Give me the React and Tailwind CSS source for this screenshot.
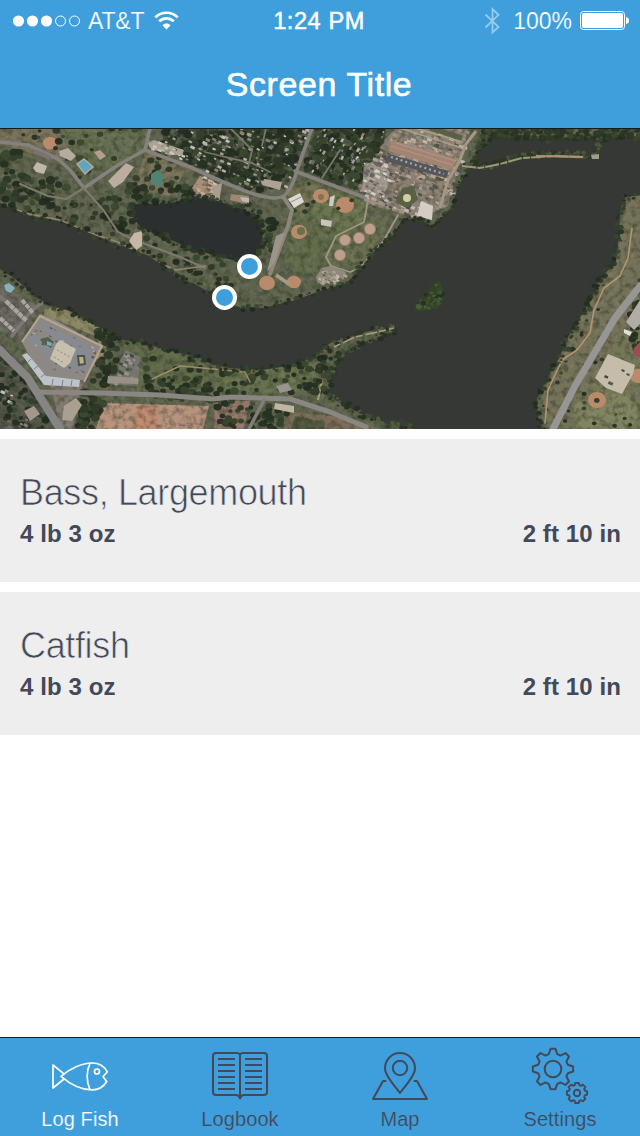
import React from "react";

/* ---------- deterministic scatter helpers for the aerial map ---------- */
function rng(seed) {
  let s = seed;
  return () => {
    s = (s * 1664525 + 1013904223) % 4294967296;
    return s / 4294967296;
  };
}
const GREENS = ["#222e1f", "#293623", "#303e28", "#1f291d", "#38472c"];
const ROOFS = ["#a39d96", "#b5aea6", "#837e78", "#93806f", "#c4c1bd", "#6c6862"];
const inside = (x, y, poly) => {
  let c = false;
  for (let i = 0, j = poly.length - 1; i < poly.length; j = i++) {
    const [xi, yi] = poly[i];
    const [xj, yj] = poly[j];
    if (yi > y !== yj > y && x < ((xj - xi) * (y - yi)) / (yj - yi) + xi) c = !c;
  }
  return c;
};
function fill(seed, poly, n, r0, r1, colors) {
  const r = rng(seed);
  const xs = poly.map((p) => p[0]);
  const ys = poly.map((p) => p[1]);
  const x0 = Math.min(...xs), x1 = Math.max(...xs), y0 = Math.min(...ys), y1 = Math.max(...ys);
  const out = [];
  for (let i = 0; i < n; i++) {
    const x = x0 + r() * (x1 - x0);
    const y = y0 + r() * (y1 - y0);
    const size = r0 + r() * (r1 - r0);
    const color = colors[Math.floor(r() * colors.length)];
    if (inside(x, y, poly)) out.push({ x, y, size, color });
  }
  return out;
}
function along(seed, pts, step, jitter, r0, r1, colors) {
  const r = rng(seed);
  const out = [];
  for (let i = 0; i < pts.length - 1; i++) {
    const [ax, ay] = pts[i];
    const [bx, by] = pts[i + 1];
    const n = Math.max(1, Math.round(Math.hypot(bx - ax, by - ay) / step));
    for (let k = 0; k < n; k++) {
      const t = k / n;
      out.push({
        x: ax + (bx - ax) * t + (r() - 0.5) * jitter,
        y: ay + (by - ay) * t + (r() - 0.5) * jitter,
        size: r0 + r() * (r1 - r0),
        color: colors[Math.floor(r() * colors.length)],
      });
    }
  }
  return out;
}
const Trees = ({ items, opacity = 0.9 }) => (
  <g opacity={opacity}>
    {items.map((t, i) => (
      <ellipse key={i} cx={t.x} cy={t.y} rx={t.size} ry={t.size * 0.85} fill={t.color} />
    ))}
  </g>
);
const Blocks = ({ items, angle = 25 }) => (
  <g>
    {items.map((t, i) => (
      <rect key={i} x={t.x} y={t.y} width={t.size * 1.6} height={t.size} fill={t.color} transform={`rotate(${angle} ${t.x} ${t.y})`} />
    ))}
  </g>
);
const str = (pts) => pts.map((p) => p.join(",")).join(" ");

/* ---------- shorelines ---------- */
const NORTH = [[0,75],[16,82],[30,88],[63,94],[87,104],[113,115],[127,120],[147,127],[167,140],[177,150],[195,156],[214,167],[240,180],[263,180],[296,172],[320,163],[345,156],[360,142],[373,124],[393,107],[402,92],[418,90],[433,99],[451,80],[459,57],[469,40]];
const COVE = [[469,40],[476,32],[476,24],[493,7],[519,10],[553,12],[576,9],[599,9],[640,9]];
const EAST = [[640,67],[626,69],[621,79],[619,97],[618,120],[613,137],[599,152],[589,175],[569,207],[559,230],[549,247],[536,273],[539,293],[543,301]];
const SOUTH = [[413,301],[390,297],[363,287],[346,278],[326,267],[330,250],[340,227],[356,217],[395,203],[395,198],[373,202],[330,215],[316,228],[293,237],[263,242],[230,240],[213,237],[200,230],[167,222],[143,215],[123,212],[100,200],[70,183],[50,178],[33,167],[17,152],[0,141]];
const RIVER = [...NORTH, ...COVE, ...EAST, ...SOUTH];
const POND = [[133,77],[143,75],[167,77],[190,69],[214,72],[240,80],[256,89],[263,104],[260,127],[240,134],[213,127],[187,119],[160,107],[140,99],[132,88]];
const SUBURB = [[165,0],[310,0],[300,33],[285,60],[255,62],[220,52],[200,38],[160,22]];
const SUBURB2 = [[316,0],[388,0],[378,25],[356,62],[336,56],[304,42]];
const CONSTRUCTION = [[371,27],[396,0],[468,0],[461,30],[448,78],[420,90],[366,76],[358,58]];

function Aerial() {
  return (
    <svg width="640" height="301" viewBox="0 0 640 301" className="block" aria-hidden="true">
      <defs>
        <filter id="grain" x="0" y="0" width="100%" height="100%" colorInterpolationFilters="sRGB">
          <feTurbulence type="fractalNoise" baseFrequency="0.16" numOctaves="4" seed="8" />
          <feColorMatrix values="0 0 0 0 0.14  0 0 0 0 0.18  0 0 0 0 0.11  2.8 0 0 0 -1.2" />
        </filter>
        <filter id="light" x="0" y="0" width="100%" height="100%" colorInterpolationFilters="sRGB">
          <feTurbulence type="fractalNoise" baseFrequency="0.2" numOctaves="3" seed="31" />
          <feColorMatrix values="0 0 0 0 0.66  0 0 0 0 0.6  0 0 0 0 0.5  0 3 0 0 -1.5" />
        </filter>
        <filter id="soft" x="0" y="0" width="100%" height="100%" colorInterpolationFilters="sRGB">
          <feGaussianBlur stdDeviation="0.55" />
          <feColorMatrix type="saturate" values="0.9" />
        </filter>
      </defs>
      <g filter="url(#soft)">
        <rect x="-4" y="-4" width="648" height="309" fill="#5f644c" />
        {/* fields and bare ground */}
        <polygon points="0,0 55,0 80,22 60,34 0,16" fill="#7b7259" />
        <polygon points="55,0 150,0 140,25 90,48 72,26" fill="#646e4e" />
        <polygon points="146,22 188,40 170,68 134,60" fill="#7b7356" />
        <polygon points="300,50 365,72 358,100 330,140 296,150 285,130 290,88" fill="#616c48" />
        <polygon points="284,60 318,58 308,84 296,82" fill="#787352" />
        <ellipse cx="340" cy="83" rx="28" ry="16" fill="#6b754c" />
        <polygon points="350,98 388,84 388,96 366,132 333,140 326,128 334,110" fill="#696f4b" />
        <polygon points="44,182 58,177 104,202 112,214 100,238 86,238 100,210 44,187" fill="#8e8860" />
        <polygon points="128,215 170,224 215,240 214,262 128,262" fill="#5f6a46" />
        <polygon points="215,244 318,236 322,262 215,270" fill="#657149" />
        <polygon points="104,275 209,278 203,301 96,301" fill="#bb927a" />
        <polygon points="136,278 160,278 157,301 134,301" fill="#c58a6c" />
        <polygon points="0,155 40,180 20,212 0,202" fill="#6a665e" />
        <polygon points="0,212 68,301 0,301" fill="#535548" />
        <polygon points="50,252 84,252 72,301 60,301" fill="#807970" />
        <polygon points="215,273 250,273 244,301 214,301" fill="#957766" />
        <polygon points="290,284 350,290 380,301 284,301" fill="#7d6d55" />
        <polygon points="295,288 325,294 324,301 291,301" fill="#4f5638" />
        <polygon points="628,68 640,68 640,300 548,300 542,268 570,208 604,150 619,100" fill="#757257" />
        <polygon points="640,170 570,301 640,301" fill="#747654" />
        <ellipse cx="606" cy="285" rx="33" ry="20" fill="#81845c" />
        <polygon points={str(CONSTRUCTION)} fill="#8d8072" />
        <polygon points={str(SUBURB)} fill="#4e5643" />
        <polygon points={str(SUBURB2)} fill="#4d5640" />
        <rect width="640" height="301" filter="url(#grain)" opacity="0.42" />
        <rect width="640" height="301" filter="url(#light)" opacity="0.22" />

        {/* ball diamonds */}
        {[[50,15,7],[299,104,8],[321,68,8],[345,77,9],[267,155,8],[294,154,7],[597,272,9],[638,248,8]].map(([x, y, r], i) => (
          <ellipse key={i} cx={x} cy={y} rx={r} ry={r * 0.9} fill="#bd8a66" />
        ))}
        <circle cx="301" cy="103" r="4" fill="#687245" />
        <circle cx="321" cy="69" r="3" fill="#84744a" />
        {[[370,101],[359,110],[345,112],[340,127]].map(([x, y], i) => (
          <circle key={i} cx={x} cy={y} r="5.6" fill="#c19d89" stroke="#8f8269" strokeWidth="0.8" />
        ))}

        {/* woods and houses */}
        <Trees items={fill(5, SUBURB, 620, 1.6, 4.8, GREENS)} />
        <Trees items={fill(6, SUBURB2, 370, 1.6, 4.4, GREENS)} />
        <Blocks items={fill(7, SUBURB, 170, 1.2, 3, ROOFS)} />
        <Blocks items={fill(8, SUBURB2, 85, 1.1, 2.8, ROOFS)} angle={-60} />
        <Trees items={fill(9, [[0,20],[22,22],[26,48],[68,50],[66,66],[40,76],[0,72]], 120, 2, 5, GREENS)} />
        <Trees items={fill(10, [[0,0],[145,0],[130,25],[80,50],[60,26]], 44, 1.8, 4, GREENS)} />
        <Trees items={fill(12, [[20,60],[80,74],[128,84],[128,120],[95,104],[10,78]], 80, 1.6, 4.2, GREENS)} />
        <Trees items={fill(13, [[92,70],[130,70],[134,95],[118,110]], 45, 2, 4.5, GREENS)} />
        <Trees items={fill(14, [[140,100],[212,128],[240,143],[236,166],[180,150],[140,124]], 85, 1.7, 3.8, GREENS)} />
        <Trees items={fill(15, [[128,62],[136,46],[200,62],[195,70],[165,77],[132,78]], 55, 2, 4.5, GREENS)} />
        <Trees items={fill(16, [[200,74],[252,76],[280,90],[272,132],[262,140],[264,100]], 110, 2, 4.5, GREENS)} />
        <Trees items={fill(17, [[96,200],[118,210],[120,225],[108,258],[92,256],[98,236]], 80, 2, 5, GREENS)} />
        <Trees items={fill(18, [[143,225],[214,236],[213,252],[145,242]], 24, 2, 3.6, GREENS)} />
        <Trees items={fill(29, [[143,246],[214,252],[213,278],[150,268]], 80, 2, 4.5, GREENS)} />
        <Trees items={fill(19, [[215,242],[322,230],[328,268],[215,268]], 60, 2, 4.6, GREENS)} />
        <Trees items={fill(20, [[80,260],[104,274],[92,301],[76,301]], 70, 2.3, 5, GREENS)} />
        <Trees items={fill(21, [[0,216],[52,285],[50,301],[0,301]], 120, 1.8, 4, GREENS)} />
        <Trees items={fill(22, [[618,90],[636,80],[625,130],[560,260],[548,295],[540,280]], 130, 1.2, 3.2, GREENS)} />
        <Trees items={fill(23, [[640,140],[640,225],[624,212],[632,180]], 50, 2, 4, GREENS)} />
        <Trees items={fill(24, [[600,220],[640,300],[550,301],[590,225]], 34, 1.4, 3, GREENS)} />
        <Trees items={fill(25, [[245,272],[290,280],[280,301],[250,301]], 50, 2, 4, GREENS)} />
        <Trees items={fill(26, [[290,45],[360,72],[350,95],[290,90]], 18, 2, 3, GREENS)} />
        <Trees items={fill(27, [[215,272],[246,272],[240,301],[214,301]], 26, 2, 4, GREENS)} />
        <Trees items={fill(28, [[145,20],[188,38],[180,50],[150,50]], 20, 2, 4, GREENS)} />

        {/* streets */}
        <g fill="none" strokeLinejoin="round" strokeLinecap="round">
          <path d="M0 14L28 17L58 31L70 42L84 60L118 37L145 22L150 0M145 22L190 39L214 50L240 61Q278 76 286 66T296 45L312 0M295 43L366 70" stroke="#85817b" strokeWidth="3.6" />
          <path d="M20 56L48 68L66 71L84 60L104 83L118 104L132 111L180 129L205 140" stroke="#7c796d" strokeWidth="2.2" />
          <path d="M205 24L225 29L252 35L270 44M230 0L252 22L248 40M266 0L262 18M340 22L322 50" stroke="#77756b" strokeWidth="1.8" />
          <path d="M284 70L292 82L288 98L270 146" stroke="#8f8777" strokeWidth="4" />
          <path d="M366 72L400 82M398 87L384 112L360 140L350 144L331 138L326 129L336 108L364 94L368 72" stroke="#9f9682" strokeWidth="1.8" />
          <path d="M0 222L28 250L60 301" stroke="#878584" strokeWidth="8" />
          <path d="M35 264L100 265L160 267L214 271L230 269L290 271L330 284L366 299" stroke="#8a8783" strokeWidth="5" />
          <path d="M264 272L249 301" stroke="#817d77" strokeWidth="3.6" />
          <path d="M0 168L24 192M12 208L32 182L52 168" stroke="#7b7773" strokeWidth="3.5" />
          <path d="M640 158L615 190L575 258L553 301" stroke="#989694" strokeWidth="7" />
          <path d="M620 148L604 160L594 182L590 205L577 222L562 232L548 262L545 295M632 100L628 130L620 148" stroke="#b4966c" strokeWidth="1.6" />
          <path d="M0 77L30 86L60 92L90 105L118 114L150 130L175 142L206 138" stroke="#958767" strokeWidth="1.4" />
          <path d="M152 251L180 238L214 241L245 244L250 254" stroke="#a08c68" strokeWidth="1.4" />
        </g>

        {/* parking lots and buildings */}
        <polygon points="32,24 37,22 51,28 49,32" fill="#7c7272" />
        <polygon points="33,40 37,34 47,38 44,46 36,44" fill="#c0b8a6" />
        <polygon points="59,23 68,20 76,28 71,33 60,28" fill="#b6ab9c" />
        <polygon points="94,24 100,22 106,28 100,32" fill="#b99d8c" />
        <polygon points="77,36 84,31 93,39 85,46" fill="#58a8c4" stroke="#b5ac9a" strokeWidth="1.4" />
        <polygon points="151,46 158,42 164,48 160,59 151,56" fill="#4c8472" />
        <polygon points="108,53 126,35 134,39 123,54 114,60" fill="#bcae9f" />
        <polygon points="148,15 154,12 184,22 182,28 165,26 150,20" fill="#aba395" />
        <Blocks items={fill(91, [[148,12],[156,11],[186,23],[182,30],[150,20]], 60, 1.2, 2.8, ["#cbc5ba", "#5a6048", "#8e877b"])} />
        <polygon points="192,60 200,48 214,53 213,65 197,66" fill="#a98f77" />
        <Blocks items={fill(92, [[190,58],[200,46],[216,54],[214,68],[194,68]], 60, 1.2, 3, ["#c3ab95", "#6a644f", "#cdc5ba", "#9d7c64"])} />
        <polygon points="134,105 142,103 142,118 136,122 129,113" fill="#c6b8a6" />
        <polygon points="288,71 300,65 304,74 294,80" fill="#dadad6" />
        <path d="M291 74L301 69" stroke="#777" strokeWidth="0.8" />
        <polygon points="330,69 335,67 333,78 329,78" fill="#cfcac1" />
        <polygon points="321,91 332,93 331,99 321,97" fill="#c9c4bb" />
        <polygon points="264,51 282,54 280,62 262,57" fill="#b0a191" />
        <polygon points="213,58 222,55 219,76 213,75" fill="#aa9d90" />
        <polygon points="231,66 249,68 247,76 230,72" fill="#a08673" />
        <polygon points="240,69 249,70 249,75 242,73" fill="#bcbab5" />
        <polygon points="276,108 285,104 275,134 267,144" fill="#9c948a" />
        <path d="M276 147L289 156" stroke="#a89b86" strokeWidth="3.5" fill="none" />
        <polygon points="316,149 322,140 330,138 346,144 344,151 336,155 318,155" fill="#92887a" />
        <Blocks items={fill(93, [[314,150],[322,140],[346,144],[344,152],[318,157]], 60, 1, 2.5, ["#c3b9aa", "#5e6150", "#aea291"])} />

        <polygon points="22,214 40,186 52,190 102,218 84,252 42,252" fill="#8f8883" />
        <polyline points="22,214 40,188 102,218 84,254" fill="none" stroke="#b9a492" strokeWidth="2" />
        <Blocks items={fill(51, [[30,205],[44,194],[98,220],[80,248],[52,244]], 110, 1, 2, ["#585653", "#77736f", "#ada7a0", "#655b55"])} />
        <polygon points="27,210 34,206 50,222 54,210 38,200 40,196 76,212 92,222 86,240 76,244 52,235" fill="#868b92" />
        <Blocks items={fill(94, [[27,210],[40,196],[76,212],[92,222],[84,242],[52,236]], 55, 1, 2, ["#605e5b", "#a3a8af", "#76797e"])} />
        <polygon points="40,211 48,209 54,214 50,219 43,216" fill="#55614d" />
        <polygon points="47,213 52,215 51,218 47,217" fill="#78aeb0" />
        <polygon points="56,216 60,212 76,221 70,235 64,240 50,231" fill="#c9c0aa" />
        <path d="M54 229L64 235M57 222L70 229" stroke="#8f8979" strokeWidth="1" strokeDasharray="2 2" />
        <polygon points="78,228 84,228 85,236 79,237" fill="#bdb17f" stroke="#4c5347" strokeWidth="2" />
        <polygon points="22,227 27,225 46,248 80,252 79,259 44,257" fill="#bdc3ca" />
        <path d="M28 234L31 231M34 241L38 238M41 249L45 246M52 257L53 251M62 258L63 252M71 258L72 252" stroke="#78828c" strokeWidth="1" />
        <path d="M6 173L27 193M0 190L14 203M22 172L33 185" stroke="#aaa59f" strokeWidth="4" strokeDasharray="5 0.8" />
        <polygon points="4,157 9,155 15,160 11,165 6,163" fill="#82b3b7" />
        <polygon points="118,236 126,222 140,229 138,258 108,256 109,248 120,248" fill="#75746e" />
        <Blocks items={fill(52, [[118,236],[126,222],[140,229],[137,257],[110,255]], 60, 1.2, 3, ["#96948e", "#595c55", "#7f7c76", "#3e4a35"])} />
        <polygon points="108,248 138,250 138,256 107,255" fill="#9b9084" />
        <polygon points="64,278 76,270 82,277 72,293 62,292" fill="#aaa08f" />
        <polygon points="24,283 34,278 40,286 30,293" fill="#a4978a" />
        <Blocks items={fill(61, [[0,250],[30,290],[18,301],[0,301]], 22, 1.5, 3.5, ROOFS)} />
        <polygon points="275,275 294,278 294,285 274,281" fill="#c0b69f" />
        <polygon points="276,258 288,255 292,262 280,265" fill="#9a958b" />
        <path d="M322 252L318 272" stroke="#ad9a78" strokeWidth="2" />
        <polygon points="595,250 608,226 635,237 633,246 622,266 606,260" fill="#c6bda8" />
        <Blocks items={[{ x: 605, y: 247, size: 2.4, color: "#3f4641" }, { x: 609, y: 253, size: 3, color: "#4f5958" }, { x: 622, y: 241, size: 2, color: "#4c4c48" }, { x: 627, y: 245, size: 2, color: "#59544e" }]} />
        <polygon points="626,194 640,172 640,196 634,202" fill="#b3aca5" />
        <polygon points="624,201 632,204 630,208 624,205" fill="#e2ded8" />
        <polygon points="634,220 640,214 640,229 633,227" fill="#a24b50" />

        {/* construction yard */}
        <Blocks items={fill(42, CONSTRUCTION, 520, 1, 3.4, ["#a3917d", "#b5a390", "#776d60", "#5c5a4e", "#c0b7aa", "#8e8e86", "#4e5143"])} angle={20} />
        <polygon points="392,12 457,31 452,42 388,23" fill="#a68270" />
        <path d="M391 18L453 37M396 15L456 33" stroke="#b79885" strokeWidth="0.9" />
        <polygon points="389,26 449,43 446,50 385,33" fill="#55555a" />
        <path d="M391 29L444 46" stroke="#a3a7ac" strokeWidth="2.2" strokeDasharray="2 3" />
        <path d="M400 0L462 20M415 0L462 14" stroke="#ab9f86" strokeWidth="1.8" fill="none" />
        <path d="M430 0L462 10" stroke="#566342" strokeWidth="5" />
        <path d="M476 3L466 16L459 34L448 52L440 80" stroke="#a9967f" strokeWidth="3" fill="none" />
        <polygon points="364,36 380,32 390,44 384,72 362,62" fill="#aaa196" opacity="0.7" />
        <Blocks items={fill(43, [[362,34],[382,32],[390,44],[384,72],[362,62]], 85, 1, 3, ["#d0cbc3", "#66635d", "#8d887e"])} />
        <polygon points="402,60 414,58 418,72 406,80 396,74" fill="#586042" />
        <circle cx="407" cy="70" r="4" fill="#d5cc9f" />
        <polygon points="421,73 433,78 432,92 417,88" fill="#d4cdc4" />

        {/* water */}
        <polygon points={str(RIVER)} fill="#353834" />
        <ellipse cx="395" cy="297" rx="16" ry="6" fill="#42453a" opacity="0.4" />
        <polygon points={str(POND)} fill="#2b2f30" />

        {/* wooded banks */}
        <Trees items={along(71, NORTH.slice(0, 14), 3, 7, 1, 2.8, GREENS)} />
        <Trees items={along(72, NORTH.slice(13, 20), 3.2, 6, 1, 2.6, GREENS)} />
        <Trees items={along(73, NORTH.slice(17), 2.6, 4, 1, 2.4, GREENS)} />
        <Trees items={along(74, COVE, 2, 5, 1.5, 3.4, GREENS)} />
        <Trees items={fill(75, [[480,0],[640,0],[640,9],[600,9],[555,12],[500,9],[478,20]], 260, 1.5, 4, ["#2c3923", "#39482d", "#263120"])} />
        <Trees items={along(76, EAST, 2.2, 6, 1, 3, GREENS)} />
        <Trees items={along(77, SOUTH.slice(0, 12), 2, 6, 1, 3, ["#2b3823", "#404f2f", "#525d3a", "#232d1f"])} />
        <Trees items={along(78, SOUTH.slice(11), 3, 6, 1, 2.8, GREENS)} />
        <Trees items={along(79, [...POND, POND[0]], 2.6, 7, 1.2, 3.2, GREENS)} />
        <Trees items={fill(80, [[316,228],[330,215],[342,222],[330,240],[326,268],[312,264]], 55, 1.6, 3.6, GREENS)} />

        {/* causeway, spit and island */}
        <Trees items={along(81, [[464,38],[490,38],[520,29],[553,25],[596,28],[600,10]], 1, 6, 1.2, 2.4, ["#36482c", "#4d5a3b", "#2a3622"])} />
        <path d="M462 38L480 40L500 36L522 30L553 28L583 29" stroke="#a1967a" strokeWidth="2" fill="none" strokeDasharray="14 1.5 7 1" />
        <path d="M536 28L583 29" stroke="#b09370" strokeWidth="1.8" />
        <polygon points="591,27 599,26 599,31 592,31" fill="#a59c86" />
        <path d="M334 219L355 209L378 204L394 200" stroke="#a1987c" strokeWidth="1.8" fill="none" strokeDasharray="7 3 12 2" />
        <polygon points="440,153 444,165 442,176 438,180 424,183 415,183 426,168 432,156" fill="#354528" />
        <Trees items={fill(82, [[440,153],[444,165],[438,180],[415,183],[430,158]], 95, 1.2, 2.8, ["#304325", "#40552e", "#4e6237", "#233220"])} />
      </g>
      <rect width="640" height="1" fill="#141c22" />
    </svg>
  );
}

function Pin({ className }) {
  return <div className={`absolute size-[25px] rounded-full border-4 border-white bg-[#3e9fdc] ${className}`} />;
}

/* ---------- tab icons ---------- */
function gear(cx, cy, outer, root, teeth, top, base) {
  let d = "";
  for (let i = 0; i < teeth; i++) {
    const a = (i / teeth) * Math.PI * 2 - Math.PI / 2;
    [[-base, root], [-top, outer], [top, outer], [base, root]].forEach(([o, r], k) => {
      const x = (cx + r * Math.cos(a + o)).toFixed(2);
      const y = (cy + r * Math.sin(a + o)).toFixed(2);
      if (i === 0 && k === 0) d += `M${x} ${y}`;
      else d += `L${x} ${y}`;
    });
  }
  return d + "Z";
}
const iconProps = { width: 60, height: 60, viewBox: "0 0 60 60", fill: "none", stroke: "currentColor", strokeWidth: 2, strokeLinejoin: "round", strokeLinecap: "round" };

const FishIcon = () => (
  <svg {...iconProps} strokeWidth="1.7">
    <path d="M11 30.3C20 22.5 32 17 42 17C49 17 54.5 20.5 57.3 26L53 30.5L56.7 35.5C53.5 41 48.5 43.8 42 43.8C31 43.8 20 38 11 30.3Z" />
    <path d="M14 27.8L3 19V42L14 33M39.8 17.8C36.3 25 36.3 35 39.8 43.2" />
    <circle cx="47" cy="25.5" r="2.5" />
  </svg>
);
const BookIcon = () => (
  <svg {...iconProps} strokeLinecap="butt">
    <path d="M30 9C29.5 7.5 28.5 7 27 7H6C4 7 3 8 3 10V46C3 48 4 49 6 49H26C28.5 49 29.5 50 30 52.5C30.5 50 31.5 49 34 49H54C56 49 57 48 57 46V10C57 8 56 7 54 7H33C31.5 7 30.5 7.5 30 9ZM30 8V53" />
    <path d="M8 13H25M8 19H25M8 25H25M8 31H25M8 37H25M8 43H25M35 13H52M35 19H52M35 25H52M35 31H52M35 37H52M35 43H52" />
  </svg>
);
const MapIcon = () => (
  <svg {...iconProps}>
    <path d="M30 52C26 46 15 31 15 22.5C15 13.8 21.5 7 30 7S45 13.8 45 22.5C45 31 34 42 30 47C26 42 15 31 15 22.5" className="hidden" />
    <path d="M30 47C26 41.5 15 30 15 22.5C15 13.8 21.5 7 30 7S45 13.8 45 22.5C45 30 34 41.5 30 47Z" />
    <circle cx="30" cy="22" r="7.2" />
    <path d="M15.5 35H13L3 53H57L47 35H44.5" />
  </svg>
);
const GearsIcon = () => (
  <svg {...iconProps}>
    <path d={gear(23, 23, 20.3, 15.4, 8, 0.12, 0.28)} />
    <circle cx="23" cy="23" r="8.3" />
    <path d={gear(47, 47, 10.2, 8.2, 8, 0.18, 0.28)} strokeWidth="1.9" />
    <circle cx="47" cy="47" r="3.2" />
  </svg>
);

const TABS = [
  { label: "Log Fish", Icon: FishIcon, color: "text-white" },
  { label: "Logbook", Icon: BookIcon, color: "text-[#434959]" },
  { label: "Map", Icon: MapIcon, color: "text-[#434959]" },
  { label: "Settings", Icon: GearsIcon, color: "text-[#434959]" },
];

function StatusBar() {
  return (
    <div className="grid h-[42px] grid-cols-3 items-center text-[23px] leading-[42px]">
      <div className="flex items-center pl-3">
        <svg width="70" height="14" viewBox="0 0 70 14" fill="white" className="-mt-px">
          <circle cx="6.5" cy="7" r="5.6" />
          <circle cx="20.5" cy="7" r="5.6" />
          <circle cx="34.5" cy="7" r="5.6" />
          <circle cx="48.5" cy="7" r="5" fill="none" stroke="white" />
          <circle cx="62.5" cy="7" r="5" fill="none" stroke="white" />
        </svg>
        <span className="ml-1.5 tracking-[-0.2px] [-webkit-text-stroke:0.2px_#3e9fdc]">AT&amp;T</span>
        <svg width="25" height="19" viewBox="0 0 25 19" className="-mt-0.5 ml-2.5" fill="none" stroke="white" strokeWidth="2.7">
          <path d="M1.3 6.4C7.5 0.2 17.5 0.2 23.7 6.4" />
          <path d="M5.2 10.3C9.3 6.3 15.7 6.3 19.8 10.3" />
          <path d="M12.5 18.5L8.4 14.3C10.8 12 14.2 12 16.6 14.3Z" fill="white" stroke="none" />
        </svg>
      </div>
      <div className="pr-0.5 text-center text-[23.5px] tracking-[0.6px] [-webkit-text-stroke:0.5px_white]">1:24 PM</div>
      <div className="flex items-center justify-end pr-2.5">
        <svg width="17" height="28" viewBox="0 0 17 28" className="-mt-px mr-3 opacity-45" fill="none" stroke="white" strokeWidth="1.8">
          <path d="M1.5 7.5L14.5 20L8.5 25.5V2L14.5 7.8L1.5 20.5" />
        </svg>
        <span className="mr-2 [-webkit-text-stroke:0.2px_#3e9fdc]">100%</span>
        <svg width="50" height="20" viewBox="0 0 50 20" className="-mt-[3px]">
          <rect x="0.5" y="1.5" width="44" height="18" rx="3" fill="none" stroke="white" />
          <rect x="2" y="3" width="41" height="15" rx="2" fill="white" />
          <path d="M46 7Q49 7.5 49 10.5T46 14Z" fill="white" />
        </svg>
      </div>
    </div>
  );
}

function Catch({ name, weight, length }) {
  return (
    <article className="h-[143px] bg-[#eeeeee] pl-5 pr-[19px] pt-8 text-[#434959]">
      <h2 className="text-[36px] leading-[44px] tracking-[-0.35px] [-webkit-text-stroke:0.7px_#eeeeee]">{name}</h2>
      <div className="flex justify-between text-[24px] font-bold leading-[38px] tracking-[0.1px]">
        <span>{weight}</span>
        <span>{length}</span>
      </div>
    </article>
  );
}

export default function App() {
  return (
    <div className="flex h-[1136px] w-[640px] flex-col overflow-hidden bg-white font-['Liberation_Sans',Arial,sans-serif]">
      <header className="h-32 bg-[#3e9fdc] text-white">
        <StatusBar />
        <h1 className="pr-0.5 pt-[17px] text-center text-[34px] leading-[50px] tracking-[0.6px] [-webkit-text-stroke:0.6px_white]">Screen Title</h1>
      </header>
      <section className="relative h-[301px]">
        <Aerial />
        <Pin className="left-[237px] top-[126px]" />
        <Pin className="left-[212px] top-[157px]" />
      </section>
      <main className="flex flex-1 flex-col gap-2.5 pt-2.5">
        <Catch name="Bass, Largemouth" weight="4 lb 3 oz" length="2 ft 10 in" />
        <Catch name="Catfish" weight="4 lb 3 oz" length="2 ft 10 in" />
      </main>
      <nav className="grid h-[99px] grid-cols-4 border-t border-[#1c2226] bg-[#3e9fdc]">
        {TABS.map(({ label, Icon, color }) => (
          <div key={label} className={`flex flex-col items-center pt-2 ${color}`}>
            <Icon />
            <span className="text-[20px] leading-[26px] tracking-[0.1px] [-webkit-text-stroke:0.2px_#3e9fdc]">{label}</span>
          </div>
        ))}
      </nav>
    </div>
  );
}
